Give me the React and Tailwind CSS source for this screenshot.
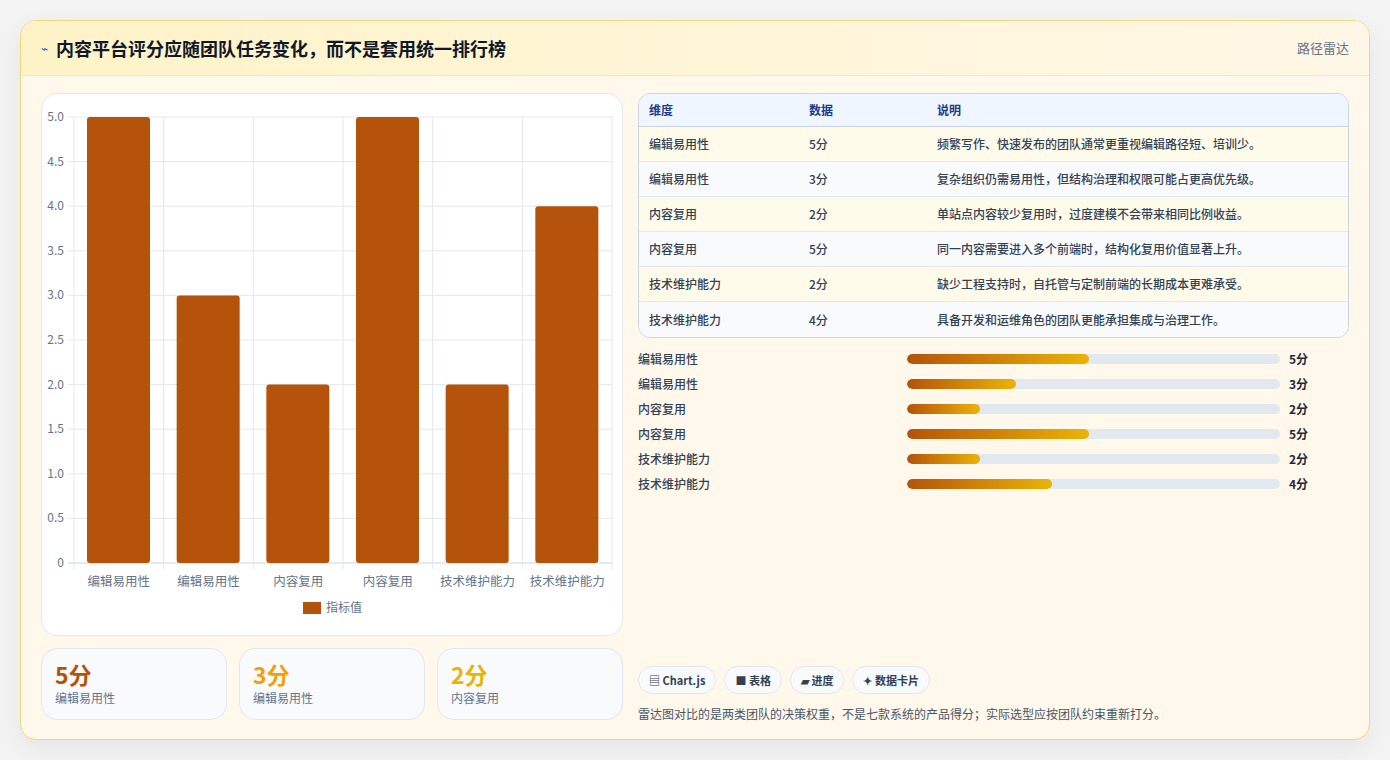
import React from "react";

const F = { fontFamily: '"Noto Sans CJK SC","Noto Sans",sans-serif' };
const data = [
  ["编辑易用性", 5, "频繁写作、快速发布的团队通常更重视编辑路径短、培训少。"],
  ["编辑易用性", 3, "复杂组织仍需易用性，但结构治理和权限可能占更高优先级。"],
  ["内容复用", 2, "单站点内容较少复用时，过度建模不会带来相同比例收益。"],
  ["内容复用", 5, "同一内容需要进入多个前端时，结构化复用价值显著上升。"],
  ["技术维护能力", 2, "缺少工程支持时，自托管与定制前端的长期成本更难承受。"],
  ["技术维护能力", 4, "具备开发和运维角色的团队更能承担集成与治理工作。"],
];

function Chart() {
  const x0 = 32, y0 = 23, w = 538, h = 446, cw = w / 6;
  const ticks = ["0", "0.5", "1.0", "1.5", "2.0", "2.5", "3.0", "3.5", "4.0", "4.5", "5.0"];
  return (
    <svg width="582" height="543" style={F}>
      {ticks.map((t, i) => {
        const y = y0 + h - (h / 10) * i;
        return (
          <g key={i}>
            <line x1={x0 - 6} x2={x0 + w} y1={y} y2={y} stroke={i === 0 ? "#cbd5e1" : "#e5e7eb"} />
            <text x={x0 - 10} y={y + 4} fontSize="12" textAnchor="end" fill="#64748b">{t}</text>
          </g>
        );
      })}
      {[0, 1, 2, 3, 4, 5, 6].map((i) => (
        <line key={i} x1={x0 + cw * i} x2={x0 + cw * i} y1={y0} y2={y0 + h + 6} stroke="#e5e7eb" />
      ))}
      {data.map((d, i) => {
        const bh = (h / 5) * d[1];
        return (
          <g key={i}>
            <rect x={x0 + cw * i + 13} y={y0 + h - bh} width={63} height={bh} rx="3" fill="#b45309" />
            <text x={x0 + cw * i + cw / 2} y={y0 + h + 23} fontSize="12.5" textAnchor="middle" fill="#64748b">{d[0]}</text>
          </g>
        );
      })}
      <rect x="261" y="508" width="18" height="12" fill="#b45309" />
      <text x="284" y="518" fontSize="12" fill="#64748b">指标值</text>
    </svg>
  );
}

export default function App() {
  return (
    <div className="min-h-[760px] bg-[#f3f3f3] p-5" style={F}>
      <div className="rounded-2xl border border-[#f5d77a] bg-[#fff8eb] overflow-hidden shadow-[0_8px_24px_rgba(0,0,0,0.06)] h-[720px] flex flex-col">
        <div className="h-[55px] flex items-center justify-between px-5 bg-gradient-to-r from-[#fef3c7] to-[#fff7e6] border-b border-[#f1e6cc]">
          <div className="flex items-center gap-2">
            <span className="text-[#2563eb] text-[12px]">⌁</span>
            <span className="text-[18px] font-bold text-[#111827]">内容平台评分应随团队任务变化，而不是套用统一排行榜</span>
          </div>
          <span className="text-[13px] text-[#64748b]">路径雷达</span>
        </div>
        <div className="flex gap-[15px] px-5 pt-[17px]">
          <div className="w-[582px] flex flex-col gap-3">
            <div className="h-[543px] bg-white rounded-2xl border border-[#e5e7eb]">
              <Chart />
            </div>
            <div className="grid grid-cols-3 gap-3">
              {[["5分", "text-[#b45309]", "编辑易用性"], ["3分", "text-[#f59e0b]", "编辑易用性"], ["2分", "text-[#eab308]", "内容复用"]].map((c, i) => (
                <div key={i} className="h-[72px] rounded-2xl border border-[#e2e8f0] bg-[#f8fafc] px-[13px] pt-[10px]">
                  <div className={`text-[23px] font-bold leading-[30px] ${c[1]}`}>{c[0]}</div>
                  <div className="text-[12px] text-[#64748b]">{c[2]}</div>
                </div>
              ))}
            </div>
          </div>
          <div className="w-[713px] flex flex-col">
            <div className="rounded-xl border border-[#cbd5e1] overflow-hidden">
              <div className="flex h-[33px] items-center bg-[#eff6ff] border-b border-[#cbd5e1] text-[12px] font-bold text-[#1e3a8a]">
                <div className="w-[170px] pl-[10px]">维度</div>
                <div className="w-[128px]">数据</div>
                <div>说明</div>
              </div>
              {data.map((d, i) => (
                <div key={i} className={`flex h-[35px] items-center text-[12px] font-medium text-[#334155] ${i % 2 ? "bg-[#f8fafc]" : "bg-[#fffbeb]"} ${i < 5 ? "border-b border-[#e2e8f0]" : ""}`}>
                  <div className="w-[170px] pl-[10px]">{d[0]}</div>
                  <div className="w-[128px]">{d[1]}分</div>
                  <div>{d[2]}</div>
                </div>
              ))}
            </div>
            <div className="mt-[8px] flex flex-col">
              {data.map((d, i) => (
                <div key={i} className="flex items-center h-[25px] text-[12px] font-medium text-[#334155]">
                  <div className="w-[269px]">{d[0]}</div>
                  <div className="w-[373px] h-[10px] rounded-full bg-[#e2e8f0] overflow-hidden">
                    <div className="h-full rounded-full bg-gradient-to-r from-[#b45309] to-[#eab308]" style={{ width: `${d[1] * 9.75}%` }} />
                  </div>
                  <div className="ml-[9px] font-bold text-[#1f2937]">{d[1]}分</div>
                </div>
              ))}
            </div>
            <div className="mt-[170px] flex gap-[8px]">
              {["▤ Chart.js", "■ 表格", "▰ 进度", "✦ 数据卡片"].map((t, i) => (
                <div key={i} className="h-[28px] px-[10px] flex items-center rounded-full border border-[#e2e8f0] bg-[#f8fafc] text-[11px] font-bold text-[#334155]">{t}</div>
              ))}
            </div>
            <div className="mt-[11px] text-[12px] text-[#475569]">雷达图对比的是两类团队的决策权重，不是七款系统的产品得分；实际选型应按团队约束重新打分。</div>
          </div>
        </div>
      </div>
    </div>
  );
}
